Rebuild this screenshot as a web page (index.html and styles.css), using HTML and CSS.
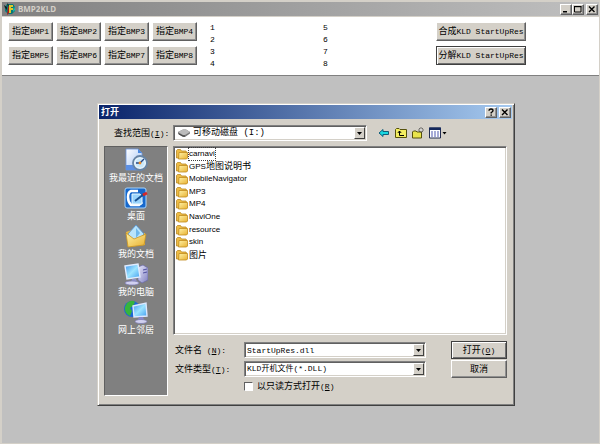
FILE: index.html
```html
<!DOCTYPE html>
<html lang="zh-CN">
<head>
<meta charset="utf-8">
<title>BMP2KLD</title>
<link rel="stylesheet" href="styles.css">
</head>
<body>
<svg class="defs" aria-hidden="true">
  <defs>
    <linearGradient id="fold" x1="0" y1="0" x2="1" y2="1"><stop offset="0" stop-color="#fff3a8"/><stop offset="1" stop-color="#e8b030"/></linearGradient>
    <linearGradient id="scr" x1="0" y1="0" x2="1" y2="1"><stop offset="0" stop-color="#3c92ee"/><stop offset=".5" stop-color="#9de4ff"/><stop offset="1" stop-color="#3f9cf0"/></linearGradient>
    <linearGradient id="page" x1="0" y1="0" x2="1" y2="1"><stop offset="0" stop-color="#ffffff"/><stop offset="1" stop-color="#9cc0f4"/></linearGradient>
    <linearGradient id="metal" x1="0" y1="0" x2="1" y2="1"><stop offset="0" stop-color="#e8e8fc"/><stop offset="1" stop-color="#8080c0"/></linearGradient>
    <symbol id="folder" viewBox="0 0 12 12">
      <path d="M.5 10V2.500L1.500 1.500h3l1 1.500h4.500l.5 1V10z" fill="#efbd45" stroke="#b98924" stroke-width=".8"/>
      <path d="M3 4.500h8.500v5.500l-1 1H2.500z" fill="url(#fold)" stroke="#c08a1c" stroke-width=".8"/>
    </symbol>
    <symbol id="arrow" viewBox="0 0 5 3"><path d="M0 0h5L2.500 3z" fill="#000"/></symbol>
    <symbol id="close" viewBox="0 0 8 8"><path d="M1 1.500l5.500 5.500M6.500 1.500L1 7" stroke="#000" stroke-width="1.400"/></symbol>
  </defs>
</svg>

<div class="app">
  <header class="titlebar inactive">
    <svg class="app-icon" viewBox="0 0 12 12">
      <path d="M3 1h6l2 3v4l-3 3H4L1 8V4z" fill="#087878"/>
      <path d="M0 2l3 2v3L1 5zM3 0l2 2-1 2z" fill="#102020"/>
      <path d="M5 2h4v2H7v1h2v2H7v3H5z" fill="#e0c828"/>
      <path d="M4 5l1-3v8L3 12z" fill="#b01818"/>
      <path d="M10 3l1 4-2 2z" fill="#20d0c0"/>
    </svg>
    <h1>BMP2KLD</h1>
    <div class="controls">
      <button class="ctl" aria-label="最小化"><svg viewBox="0 0 8 8"><path d="M1 6h4v1.500H1z"/></svg></button>
      <button class="ctl" aria-label="最大化"><svg viewBox="0 0 8 8"><path d="M.5 1.500h6.500v5.500H.5z" fill="none" stroke="#000"/><path d="M0 1h7.500v1.200H0z"/></svg></button>
      <button class="ctl apart" aria-label="关闭"><svg><use href="#close"/></svg></button>
    </div>
  </header>

  <section class="toolbar">
    <div class="assign">
      <button>指定<span class="m">BMP1</span></button><button>指定<span class="m">BMP2</span></button><button>指定<span class="m">BMP3</span></button><button>指定<span class="m">BMP4</span></button>
      <button>指定<span class="m">BMP5</span></button><button>指定<span class="m">BMP6</span></button><button>指定<span class="m">BMP7</span></button><button>指定<span class="m">BMP8</span></button>
    </div>
    <div class="slots m"><span>1</span><span>2</span><span>3</span><span>4</span></div>
    <div class="slots m"><span>5</span><span>6</span><span>7</span><span>8</span></div>
    <div class="actions">
      <button>合成<span class="m">KLD StartUpRes</span></button>
      <button class="default">分解<span class="m">KLD StartUpRes</span></button>
    </div>
  </section>

  <main class="workspace">
    <div class="dialog" role="dialog" aria-labelledby="dlg-title">
      <header class="titlebar active">
        <h2 id="dlg-title">打开</h2>
        <div class="controls">
          <button class="ctl" aria-label="帮助"><svg viewBox="0 0 8 8"><path d="M2 2.800Q2 1 4 1t2 1.700Q6 3.800 4.200 4.500v1" fill="none" stroke="#000" stroke-width="1.300"/><path d="M3.500 6.400h1.400v1.400H3.500z"/></svg></button>
          <button class="ctl apart" aria-label="关闭"><svg><use href="#close"/></svg></button>
        </div>
      </header>

      <div class="lookin">
        <label for="look">查找范围<span class="m">(<u>I</u>):</span></label>
        <div class="combo drive">
          <svg class="disk" viewBox="0 0 14 10"><path d="M1 4l5-2.500h3L13 4v1.500L8 9H6L1 6z" fill="#777"/><path d="M1 4l5-2.500h3L13 4 8 7H6z" fill="#bbb"/><path d="M2 6l4 2h2" fill="none" stroke="#444"/></svg>
          <select id="look"><option>可移动磁盘 (I:)</option></select>
          <span class="drop"><svg><use href="#arrow"/></svg></span>
        </div>
        <div class="tools">
          <button aria-label="后退"><svg viewBox="0 0 12 12"><path d="M1 6l4-3.500v2h5.500v3H5v2z" fill="#18d8e0" stroke="#045070" stroke-width=".9"/></svg></button>
          <button aria-label="向上一级"><svg viewBox="0 0 12 12"><path d="M.5 10.500V2.500l1-1H4l1 1h6.500v8z" fill="#f4ee60" stroke="#55500c"/><path d="M4.500 4v4.500H9M2.800 6l1.700-2 1.700 2" fill="none" stroke="#000"/></svg></button>
          <button aria-label="新建文件夹"><svg viewBox="0 0 12 12"><path d="M.5 11V5l1-1H4l1 1h4.500v6z" fill="#e9e44c" stroke="#55500c"/><path d="M9 0v6M6 3h6M7 1l4 4M11 1L7 5" stroke="#444" stroke-width=".7"/><circle cx="9" cy="3" r="1" fill="#fff"/></svg></button>
          <button class="views" aria-label="查看菜单"><svg viewBox="0 0 18 12"><path d="M.5 1h11v10H.5z" fill="#fff" stroke="#222c50"/><path d="M0 .5h12v2.500H0z" fill="#14285c"/><path d="M2 4.500h2v1H2zM5 4.500h2v1H5zM8 4.500h2v1H8zM2 6.500h2v1H2zM5 6.500h2v1H5zM8 6.500h2v1H8zM2 8.500h2v1H2zM5 8.500h2v1H5zM8 8.500h2v1H8z" fill="#5058b0"/><path d="M13.500 5h4l-2 2.500z"/></svg></button>
        </div>
      </div>

      <div class="body">
        <nav class="places">
          <a href="#"><svg viewBox="0 0 24 24"><path d="M2 1h12l4 4v17H2z" fill="url(#page)" stroke="#6c94dc" stroke-width=".8"/><path d="M14 1v4h4z" fill="#4888e0"/><path d="M2 17h12v5H2z" fill="#5b8fe4"/><circle cx="16" cy="15" r="7" fill="#e8f4fc" stroke="#6684a4" stroke-width="1.800"/><circle cx="16" cy="15" r="4.500" fill="#c8e8fa"/><path d="M16 15l4-4M16 15h-4" stroke="#244484" stroke-width="1.400"/><circle cx="16" cy="15" r="1.400" fill="#ee8822"/></svg><span>我最近的文档</span></a>
          <a href="#"><svg viewBox="0 0 24 24"><rect x="1" y="2" width="21" height="20" rx="2" fill="#1668cc" stroke="#a8d4fc"/><path d="M14 5H7Q4 6 4 11t3 8h8l3-3" fill="none" stroke="#fff" stroke-width="2.500"/><path d="M8 8h8l2 3v7H8z" fill="#9ad4fc" stroke="#e8f8ff"/><path d="M11 15l9-7" stroke="#185090" stroke-width="2"/><path d="M19 9l4-2" stroke="#d42828" stroke-width="3"/></svg><span>桌面</span></a>
          <a href="#"><svg viewBox="0 0 24 24"><path d="M2 8l6-2 4 4 9-1v12L4 23z" fill="#eab840"/><path d="M12 1l8 9-9 10-7-10z" fill="#b8e4fc" stroke="#5090d0" stroke-width=".8"/><path d="M12 4l4 5-4 5" fill="#6eb8ec"/><path d="M2 9l8 6 12-5-2 11-16 2z" fill="url(#fold)" stroke="#c89424" stroke-width=".8"/></svg><span>我的文档</span></a>
          <a href="#"><svg viewBox="0 0 24 24"><path d="M14 5l5-2 5 3v12l-6 3-4-3z" fill="url(#metal)" stroke="#6868a8" stroke-width=".7"/><path d="M19 8l4-1M19 11l4-1" stroke="#5050a0"/><path d="M1 4l13-2 2 13-13 2z" fill="url(#scr)" stroke="#e0ecff" stroke-width="1.400"/><path d="M8 17h4l1 3H7z" fill="#9292cc"/><ellipse cx="8" cy="21" rx="7" ry="2" fill="#d0d0f0" stroke="#7878b0" stroke-width=".7"/></svg><span>我的电脑</span></a>
          <a href="#"><svg viewBox="0 0 24 24"><circle cx="8" cy="9" r="8" fill="#1c66d4"/><path d="M3 3q5-4 8-1l-2 4-3 2 2 3-2 5Q0 13 1 7z" fill="#36b43c"/><path d="M9 6l13-3 1 13-13 1z" fill="url(#scr)" stroke="#dce8ff" stroke-width="1.400"/><path d="M15 17h4l1 3h-6z" fill="#8888c8"/><ellipse cx="17" cy="21.500" rx="6" ry="2" fill="#d0d0f0" stroke="#7474ac" stroke-width=".7"/></svg><span>网上邻居</span></a>
        </nav>

        <div class="pane">
          <ul class="files">
            <li><svg><use href="#folder"/></svg><span class="focus t">carnavi</span></li>
            <li><svg><use href="#folder"/></svg><span><span class="t">GPS</span>地图说明书</span></li>
            <li><svg><use href="#folder"/></svg><span class="t">MobileNavigator</span></li>
            <li><svg><use href="#folder"/></svg><span class="t">MP3</span></li>
            <li><svg><use href="#folder"/></svg><span class="t">MP4</span></li>
            <li><svg><use href="#folder"/></svg><span class="t">NaviOne</span></li>
            <li><svg><use href="#folder"/></svg><span class="t">resource</span></li>
            <li><svg><use href="#folder"/></svg><span class="t">skin</span></li>
            <li><svg><use href="#folder"/></svg><span>图片</span></li>
          </ul>

          <form class="fields">
            <label for="fname">文件名<span class="m">&nbsp;(<u>N</u>):</span></label>
            <div class="combo"><input id="fname" type="text" value="StartUpRes.dll"><span class="drop"><svg><use href="#arrow"/></svg></span></div>
            <button type="button" class="default">打开<span class="m">(<u>O</u>)</span></button>
            <label for="ftype">文件类型<span class="m">(<u>T</u>):</span></label>
            <div class="combo"><select id="ftype"><option>KLD开机文件(*.DLL)</option></select><span class="drop"><svg><use href="#arrow"/></svg></span></div>
            <button type="button">取消</button>
            <label class="readonly"><input type="checkbox"><span>以只读方式打开<span class="m">(<u>R</u>)</span></span></label>
          </form>
        </div>
      </div>
    </div>
  </main>
</div>
</body>
</html>
```
FILE: styles.css
```css
* { box-sizing: border-box; }

body {
  margin: 0;
  background: #d4d0c8;
  color: #000;
  font: 9px/12px "Noto Sans CJK SC", sans-serif;
}

button, input, select { font: inherit; color: inherit; margin: 0; }
h1, h2, ul { margin: 0; padding: 0; }
svg { display: block; flex: none; }
.defs { position: absolute; width: 0; height: 0; }

.m { font-family: "Liberation Mono", monospace; font-size: 8px; }
.t { font-family: "Liberation Sans", sans-serif; font-size: 8px; }

.app {
  display: flex;
  flex-direction: column;
  min-height: 100vh;
  padding: 2px 1px 1px 2px;
}

/* Title bars */
.titlebar {
  display: flex;
  align-items: center;
  height: 14px;
  padding: 0 1px 0 2px;
  gap: 2px;
}
.inactive { background: linear-gradient(90deg, #808080, #c0c0c0); color: #d4d0c8; }
.active { background: linear-gradient(90deg, #0a246a, #a6caf0); color: #fff; }
.titlebar h1 { font: bold 8px/12px "Noto Sans", sans-serif; }
.titlebar h2 { font-size: 9px; line-height: 12px; font-weight: bold; }
.app-icon { width: 12px; height: 12px; }
.controls { display: flex; margin-left: auto; }

/* Raised push buttons */
button {
  padding: 0;
  background: #d4d0c8;
  border: 1px solid;
  border-color: #fff #606060 #606060 #fff;
  box-shadow: inset -1px -1px #909090;
  white-space: nowrap;
}
button.default { border-color: #404040; box-shadow: inset 1px 1px #fff, inset -1px -1px #707070; }
.ctl { display: grid; place-items: center; width: 12px; height: 11px; }
.ctl svg { width: 8px; height: 8px; }
.ctl.apart { margin-left: 2px; }

/* Main toolbar */
.toolbar {
  display: flex;
  align-items: flex-start;
  margin-top: 1px;
  padding: 5px 0 5px 6px;
  background: #fff;
  border-bottom: 1px solid #808080;
}
.toolbar button { height: 19px; }
.assign { display: grid; grid-template-columns: repeat(4, 45px); gap: 5px 3px; width: 202px; }
.slots { display: grid; grid-auto-rows: 12px; flex: 0 0 113px; }
.actions { display: grid; grid-template-columns: 90px; gap: 5px; }

.workspace { position: relative; flex: 1; background: #c0c0c0; }

/* Open dialog */
.dialog {
  position: absolute;
  left: 95px;
  top: 27px;
  width: 418px;
  padding: 1px 2px 9px 1px;
  background: #d4d0c8;
  border: 1px solid;
  border-color: #d4d0c8 #404040 #404040 #d4d0c8;
  box-shadow: inset 1px 1px #fff, inset -1px -1px #808080;
}
.lookin { display: flex; align-items: center; padding: 6px 0 5px 15px; }
.lookin label { width: 59px; }

/* Sunken fields */
.combo, .files {
  background: #fff;
  border: 1px solid;
  border-color: #808080 #fff #fff #808080;
  box-shadow: inset 1px 1px #606060, inset -1px -1px #d4d0c8;
}
.combo { position: relative; display: flex; align-items: center; height: 16px; min-width: 0; }
.combo select, .combo input {
  flex: 1;
  min-width: 0;
  height: 14px;
  padding: 0 13px 0 2px;
  appearance: none;
  background: transparent;
  border: 0;
  outline: 0;
}
.combo input, #ftype { font-family: "Liberation Mono", "Noto Sans CJK SC", monospace; font-size: 8px; }
#look { font-family: "Liberation Mono", "Noto Sans CJK SC", monospace; }
.drive { width: 194px; }
.disk { width: 14px; height: 10px; margin-left: 3px; }
.drop {
  position: absolute;
  right: 1px;
  top: 1px;
  bottom: 1px;
  display: grid;
  place-items: center;
  width: 11px;
  background: #d4d0c8;
  border: 1px solid;
  border-color: #fff #404040 #404040 #fff;
  pointer-events: none;
}
.drop svg { width: 5px; height: 3px; }

.tools { display: flex; gap: 5px; margin-left: 11px; }
.tools button { background: none; border: 0; box-shadow: none; }
.tools svg { width: 12px; height: 12px; }
.tools .views svg { width: 18px; }

.body { display: flex; gap: 5px; padding: 0 5px; }
.places {
  display: flex;
  flex-direction: column;
  gap: 2px;
  flex: 0 0 64px;
  padding: 1px 0;
  background: #808080;
  border: 1px solid;
  border-color: #606060 #fff #fff #606060;
}
.places a {
  display: flex;
  flex-direction: column;
  align-items: center;
  color: #fff;
  text-decoration: none;
  white-space: nowrap;
}
.places svg { width: 24px; height: 24px; }

.pane { flex: 1; min-width: 0; }
.files {
  display: grid;
  grid-template-rows: repeat(9, 1fr);
  height: 189px;
  padding: 1px 1px 73px 2px;
  list-style: none;
}
.files li { display: flex; align-items: center; gap: 1px; min-height: 0; }
.files li svg { width: 12px; height: 12px; }
.focus { outline: 1px dotted #404040; }

.fields {
  display: grid;
  grid-template-columns: 69px 182px 1fr;
  grid-template-rows: 16px 16px 12px;
  align-items: center;
  row-gap: 3px;
  padding: 7px 0 4px 2px;
}
.fields button { grid-column: 3; justify-self: end; width: 56px; height: 18px; }
.readonly { grid-column: 2; display: flex; align-items: center; gap: 4px; }
.readonly input {
  appearance: none;
  width: 9px;
  height: 9px;
  background: #fff;
  border: 1px solid;
  border-color: #606060 #fff #fff #606060;
}
```
